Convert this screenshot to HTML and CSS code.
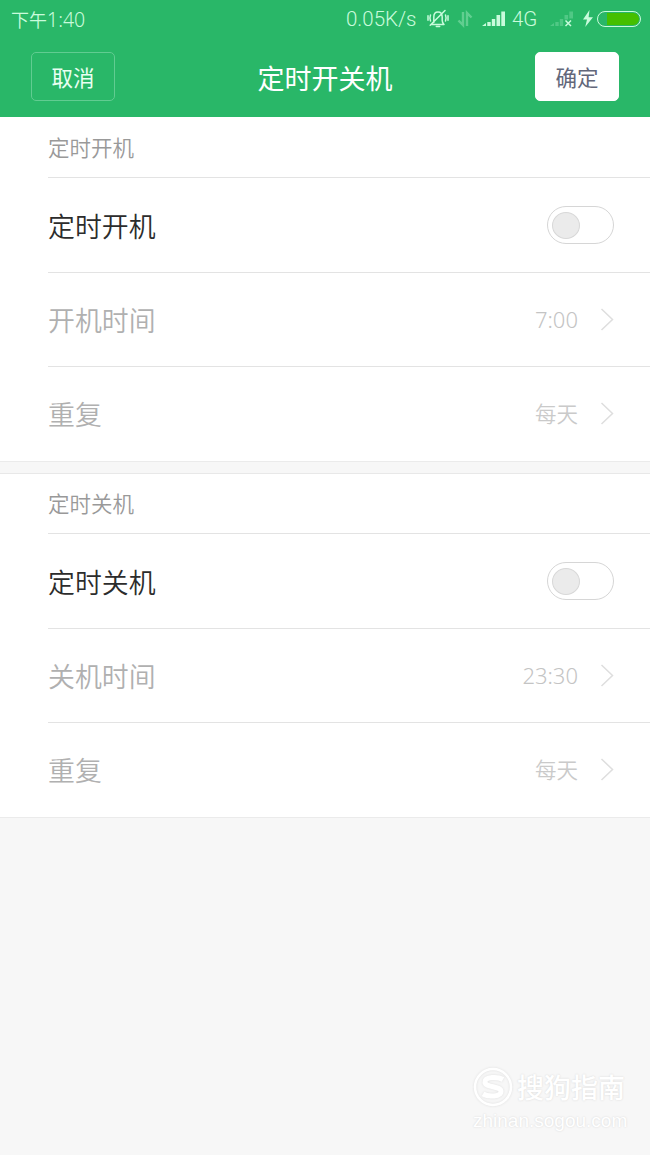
FILE: index.html
```html
<!DOCTYPE html>
<html lang="zh-CN">
<head>
<meta charset="utf-8">
<title>定时开关机</title>
<link rel="stylesheet" href="styles.css">
</head>
<body>
<div class="screen">
  <header class="header">
    <div class="status">
      <span class="clock">下午<span class="digits">1:40</span></span>
      <span class="speed">0.05K/s</span>
      <svg class="icon-bell" width="22" height="20" viewBox="0 0 22 20" fill="none" stroke="currentColor" stroke-width="1.5" stroke-linecap="round">
        <path d="M5 15.5H17M6.8 13.5V8C6.8 5 8.4 3 11 3S15.2 5 15.2 8V11.5C15.2 13.5 16.2 14.5 17 15.5M9.3 17.6H12.7M18 1.5L3.2 16.2M3.5 6C2.7 8 2.7 10 3.5 12M1 6.8V11.2M18.5 6C19.3 8 19.3 10 18.5 12M21 6.8V11.2"/>
      </svg>
      <svg class="icon-data" width="16" height="18" viewBox="0 0 16 18" fill="none" stroke="currentColor" stroke-width="2.4">
        <path d="M6 2V15L1.5 10.5M10 16V3L14.5 7.5"/>
      </svg>
      <svg class="icon-signal" width="24" height="18" viewBox="0 0 24 18" fill="currentColor">
        <path d="M0 16L4 13V16ZM5.3 12H8.7V16H5.3ZM9.8 9H13.2V16H9.8ZM14.5 5H18.1V16H14.5ZM19.3 1.5H23V16H19.3Z"/>
      </svg>
      <span class="network">4G</span>
      <svg class="icon-nosignal" width="24" height="18" viewBox="0 0 24 18" fill="currentColor">
        <path opacity=".25" d="M0 16L4 13V16ZM5.3 12H8.7V16H5.3ZM9.8 9H13.2V16H9.8ZM14.5 5H18.1V9.5H14.5ZM19.3 1.5H23V8.5H19.3Z"/>
        <path d="M15.5 10.5L21 16M21 10.5L15.5 16" stroke="currentColor" stroke-width="1.5"/>
      </svg>
      <svg class="icon-bolt" width="10" height="18" viewBox="0 0 10 18" fill="currentColor">
        <path d="M6.5 0L0 9.6H4L2.2 17L10 7.2H5.6Z"/>
      </svg>
      <span class="battery"><span class="charge"></span></span>
    </div>
    <nav class="bar">
      <button class="btn btn-cancel">取消</button>
      <h1 class="title">定时开关机</h1>
      <button class="btn btn-ok">确定</button>
    </nav>
  </header>

  <section class="group">
    <h2 class="caption">定时开机</h2>
    <div class="row row-main"><span class="label">定时开机</span><span class="switch"><span class="knob"></span></span></div>
    <div class="row"><span class="label">开机时间</span><span class="value value-time">7:00</span><svg class="chevron" width="14" height="24" viewBox="0 0 14 24"><path d="M1.5 1L12.5 11.5L1.5 22"/></svg></div>
    <div class="row"><span class="label">重复</span><span class="value">每天</span><svg class="chevron" width="14" height="24" viewBox="0 0 14 24"><path d="M1.5 1L12.5 11.5L1.5 22"/></svg></div>
  </section>

  <section class="group">
    <h2 class="caption">定时关机</h2>
    <div class="row row-main"><span class="label">定时关机</span><span class="switch"><span class="knob"></span></span></div>
    <div class="row"><span class="label">关机时间</span><span class="value value-time">23:30</span><svg class="chevron" width="14" height="24" viewBox="0 0 14 24"><path d="M1.5 1L12.5 11.5L1.5 22"/></svg></div>
    <div class="row"><span class="label">重复</span><span class="value">每天</span><svg class="chevron" width="14" height="24" viewBox="0 0 14 24"><path d="M1.5 1L12.5 11.5L1.5 22"/></svg></div>
  </section>

  <footer class="watermark">
    <div class="brand">
      <svg class="logo" width="40" height="40" viewBox="0 0 40 40" fill="none">
        <circle cx="20" cy="20" r="18" stroke-width="2.5"/>
        <path d="M30 12.5C25 9.5 12 9.5 12 15C12 21 28 18.5 28 24.5C28 30 15 30 10 27" stroke-width="5"/>
      </svg>
      <span class="brand-name">搜狗指南</span>
    </div>
    <span class="site">zhinan.sogou.com</span>
  </footer>
</div>
</body>
</html>
```

FILE: styles.css
```css
* { box-sizing: border-box; }

body {
  margin: 0;
  background: #f7f7f7;
  font-family: Roboto, "Noto Sans CJK SC", sans-serif;
}

.screen {
  display: flex;
  flex-direction: column;
  width: 650px;
  height: 1155px;
  overflow: hidden;
}

.header {
  height: 117px;
  background: #29b768;
  color: #fff;
}

.status {
  display: flex;
  align-items: center;
  height: 37px;
  padding: 0 9px 0 11px;
  color: #c9fbdc;
  font-size: 20px;
  line-height: 37px;
}

.clock { padding-top: 2px; font-size: 18px; font-weight: 350; white-space: nowrap; }
.digits { font-family: "Noto Sans", sans-serif; font-size: 19.5px; font-weight: 350; }
.speed { width: 72px; margin-left: auto; padding-top: 2px; font-size: 20.5px; font-weight: 350; white-space: nowrap; }
.icon-bell { margin-left: 9px; }
.icon-data { margin-left: 8px; opacity: .35; }
.icon-signal { margin-left: 9px; }
.network { width: 28px; margin-left: 6px; padding-top: 2px; font-size: 20.5px; font-weight: 350; }
.icon-nosignal { margin-left: 10px; }
.icon-bolt { margin-left: 9px; }

.battery {
  width: 44px;
  height: 16px;
  margin-left: 4px;
  padding: 1px;
  border: 1.5px solid #c9fbdc;
  border-radius: 8px;
}

.charge {
  display: block;
  width: 32px;
  height: 12px;
  margin-left: auto;
  border-radius: 0 6px 6px 0;
  background: #45bf00;
}

.bar {
  display: flex;
  align-items: center;
  justify-content: space-between;
  height: 80px;
  padding: 0 31px 1px 31px;
}

.btn {
  width: 84px;
  height: 49px;
  padding: 0;
  border: 1px solid #61cc91;
  border-radius: 5px;
  background: transparent;
  color: #e9fff2;
  font-family: inherit;
  font-size: 21.5px;
}

.btn-ok { border-color: #fff; background: #fff; color: #62677a; }

.title { margin: 0; padding-top: 6px; font-size: 27px; font-weight: 400; line-height: 40px; }

.group {
  height: 345px;
  padding-left: 48px;
  border-bottom: 1px solid #ebebeb;
  background: #fff;
}

.group + .group {
  margin-top: 11px;
  border-top: 1px solid #e8e8e8;
}

.caption {
  height: 60px;
  margin: 0;
  color: #999;
  font-size: 21.5px;
  font-weight: 350;
  line-height: 64px;
}

.group + .group .caption { height: 59px; line-height: 62px; }

.row {
  display: flex;
  align-items: center;
  height: 94px;
  padding-right: 36px;
  border-top: 1px solid #e3e3e3;
  color: #b0b0b0;
  font-size: 26.9px;
  font-weight: 350;
}

.row-main { height: 95px; color: #2c2c2c; }

.switch {
  width: 67px;
  height: 38px;
  margin-left: auto;
  padding: 5px 4px;
  border: 1px solid #d6d6d6;
  border-radius: 19px;
}

.knob {
  display: block;
  width: 28px;
  height: 27px;
  border: 1px solid #d8d8d8;
  border-radius: 50%;
  background: #ebebeb;
}

.value { margin-left: auto; padding-bottom: 2px; color: #cacaca; font-size: 21.5px; }

.value-time {
  color: #c4c4c4;
  font-family: "Noto Sans", sans-serif;
  font-size: 22px;
  font-weight: 300;
}

.chevron {
  margin-left: 22px;
  fill: none;
  stroke: #dedede;
  stroke-width: 1.5;
}

.watermark {
  display: flex;
  flex-direction: column;
  width: 155px;
  margin: auto 22px 22px auto;
  color: #fff;
  font-family: "Liberation Sans", "Noto Sans CJK SC", sans-serif;
  text-shadow: 0 0 2px #d4d4d4;
}

.brand { display: flex; align-items: center; gap: 4px; height: 42px; }
.logo { flex: none; stroke: #fff; filter: drop-shadow(0 0 1px #ddd); }
.brand-name { padding-top: 3px; font-size: 27px; font-weight: 500; line-height: 42px; white-space: nowrap; }
.site { font-size: 19px; line-height: 25px; white-space: nowrap; }
```
